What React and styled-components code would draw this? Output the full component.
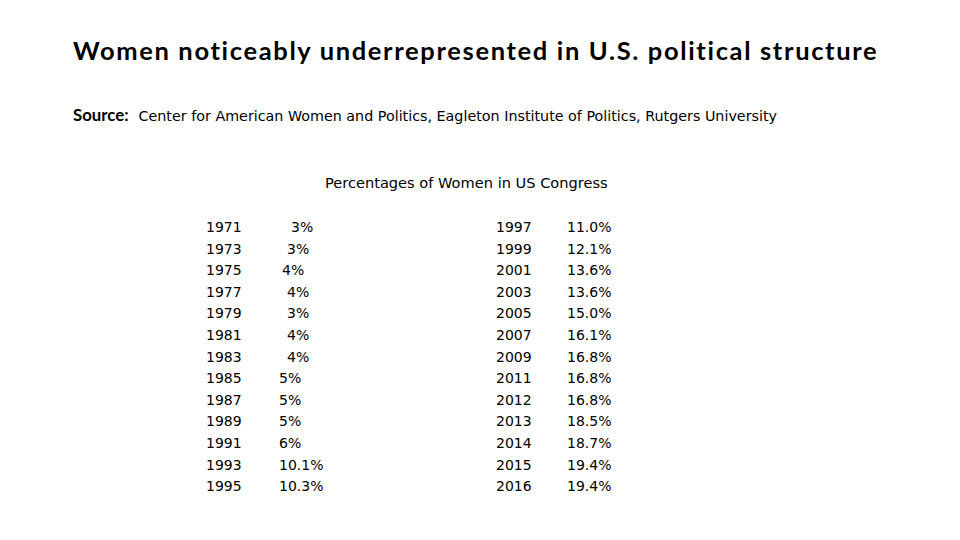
import React from "react";
import styled, { createGlobalStyle } from "styled-components";

const Global = createGlobalStyle`
  html, body { margin: 0; padding: 0; background: #fff; }
  body { width: 960px; height: 540px; overflow: hidden; }
`;

const Slide = styled.div`
  width: 960px;
  height: 540px;
  box-sizing: border-box;
  padding: 34px 0 0 73px;
  color: #000;
  display: flex;
  flex-direction: column;
`;

const Title = styled.h1`
  margin: 0;
  font-family: Lato, "Liberation Sans", sans-serif;
  font-weight: 700;
  font-size: 25.5px;
  line-height: 32px;
  letter-spacing: 1.65px;
  white-space: nowrap;
`;

const SourceLine = styled.p`
  margin: 38px 0 0;
  font-family: "DejaVu Sans", sans-serif;
  font-size: 14.3px;
  line-height: 22px;
  white-space: nowrap;
`;

const SourceLabel = styled.span`
  font-family: Lato, "Liberation Sans", sans-serif;
  font-weight: 700;
  font-size: 16.8px;
  margin-right: 10px;
`;

const Caption = styled.div`
  margin: 45px 0 0;
  width: 887px;
  box-sizing: border-box;
  padding-left: 252px;
  font-family: "DejaVu Sans", sans-serif;
  font-size: 14.6px;
  line-height: 22px;
`;

const Table = styled.div`
  display: flex;
  margin-top: 23px;
  padding-left: 133px;
  font-family: "DejaVu Sans", sans-serif;
  font-size: 14px;
  line-height: 21.6px;
`;

const Group = styled.div`
  display: grid;
  grid-template-columns: ${(p) => p.$yearCol}px auto;
  width: ${(p) => p.$width}px;
  align-content: start;
`;

const Year = styled.span``;

const Pct = styled.span`
  padding-left: ${(p) => p.$indent || 0}px;
`;

const left = [
  ["1971", "3%", 12],
  ["1973", "3%", 8],
  ["1975", "4%", 3],
  ["1977", "4%", 8],
  ["1979", "3%", 8],
  ["1981", "4%", 8],
  ["1983", "4%", 8],
  ["1985", "5%", 0],
  ["1987", "5%", 0],
  ["1989", "5%", 0],
  ["1991", "6%", 0],
  ["1993", "10.1%", 0],
  ["1995", "10.3%", 0],
];

const right = [
  ["1997", "11.0%"],
  ["1999", "12.1%"],
  ["2001", "13.6%"],
  ["2003", "13.6%"],
  ["2005", "15.0%"],
  ["2007", "16.1%"],
  ["2009", "16.8%"],
  ["2011", "16.8%"],
  ["2012", "16.8%"],
  ["2013", "18.5%"],
  ["2014", "18.7%"],
  ["2015", "19.4%"],
  ["2016", "19.4%"],
];

export default function App() {
  return (
    <>
      <Global />
      <Slide>
        <Title>Women noticeably underrepresented in U.S. political structure</Title>
        <SourceLine>
          <SourceLabel>Source:</SourceLabel>Center for American Women and Politics, Eagleton Institute of Politics, Rutgers University
        </SourceLine>
        <Caption>Percentages of Women in US Congress</Caption>
        <Table>
          <Group $yearCol={73} $width={290}>
            {left.map(([y, p, i]) => (
              <React.Fragment key={y}>
                <Year>{y}</Year>
                <Pct $indent={i}>{p}</Pct>
              </React.Fragment>
            ))}
          </Group>
          <Group $yearCol={71} $width={200}>
            {right.map(([y, p]) => (
              <React.Fragment key={y}>
                <Year>{y}</Year>
                <Pct>{p}</Pct>
              </React.Fragment>
            ))}
          </Group>
        </Table>
      </Slide>
    </>
  );
}
